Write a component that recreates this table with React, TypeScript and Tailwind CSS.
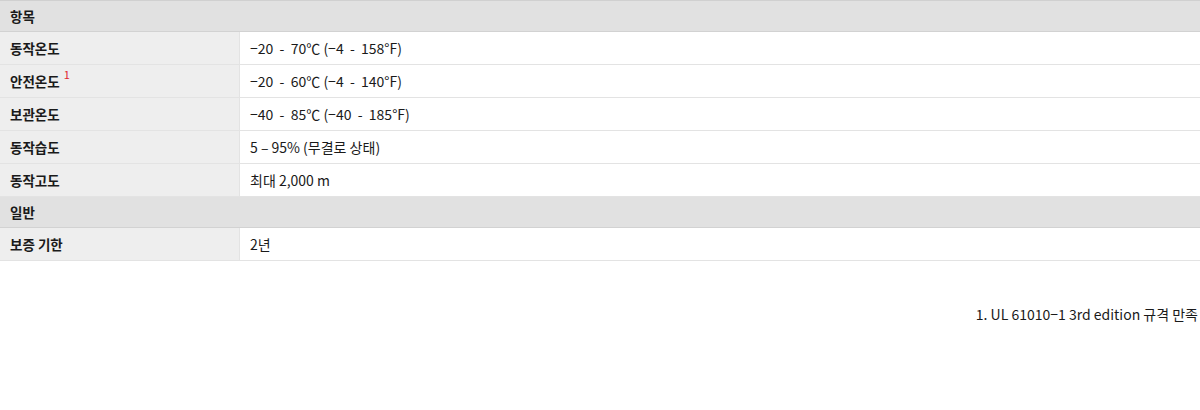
const rows: { type: "head" | "row"; label: string; value?: string; note?: string }[] = [
  { type: "head", label: "항목" },
  { type: "row", label: "동작온도", value: "−20  -  70℃ (−4  -  158°F)" },
  { type: "row", label: "안전온도", value: "−20  -  60℃ (−4  -  140°F)", note: "1" },
  { type: "row", label: "보관온도", value: "−40  -  85℃ (−40  -  185°F)" },
  { type: "row", label: "동작습도", value: "5 – 95% (무결로 상태)" },
  { type: "row", label: "동작고도", value: "최대 2,000 m" },
  { type: "head", label: "일반" },
  { type: "row", label: "보증 기한", value: "2년" },
];

const App = () => {
  return (
    <div className="w-[1200px] h-[410px] bg-white text-[13.5px] text-[#1a1a1a] font-['Noto_Sans_CJK_KR','Noto_Sans',sans-serif]">
      <div className="border-t border-[#d0d0d0]">
        {rows.map((r, i) =>
          r.type === "head" ? (
            <div
              key={i}
              className="h-[31px] flex items-center px-[10px] bg-[#e1e1e1] border-b border-[#d2d2d2] font-semibold"
            >
              {r.label}
            </div>
          ) : (
            <div key={i} className="h-[33px] flex border-b border-[#e3e3e3]">
              <div className="w-[240px] shrink-0 flex items-center px-[10px] bg-[#eeeeee] border-r border-[#e3e3e3] font-semibold">
                {r.label}
                {r.note && (
                  <sup className="ml-[4px] -mt-[4px] text-[11px] font-normal text-[#e0282e]">{r.note}</sup>
                )}
              </div>
              <div className="flex-1 flex items-center px-[10px] text-[14px] whitespace-pre">{r.value}</div>
            </div>
          )
        )}
      </div>
      <div className="mt-[43px] pr-[2px] text-right text-[14px]">1. UL 61010−1 3rd edition 규격 만족</div>
    </div>
  );
};

export default App;
